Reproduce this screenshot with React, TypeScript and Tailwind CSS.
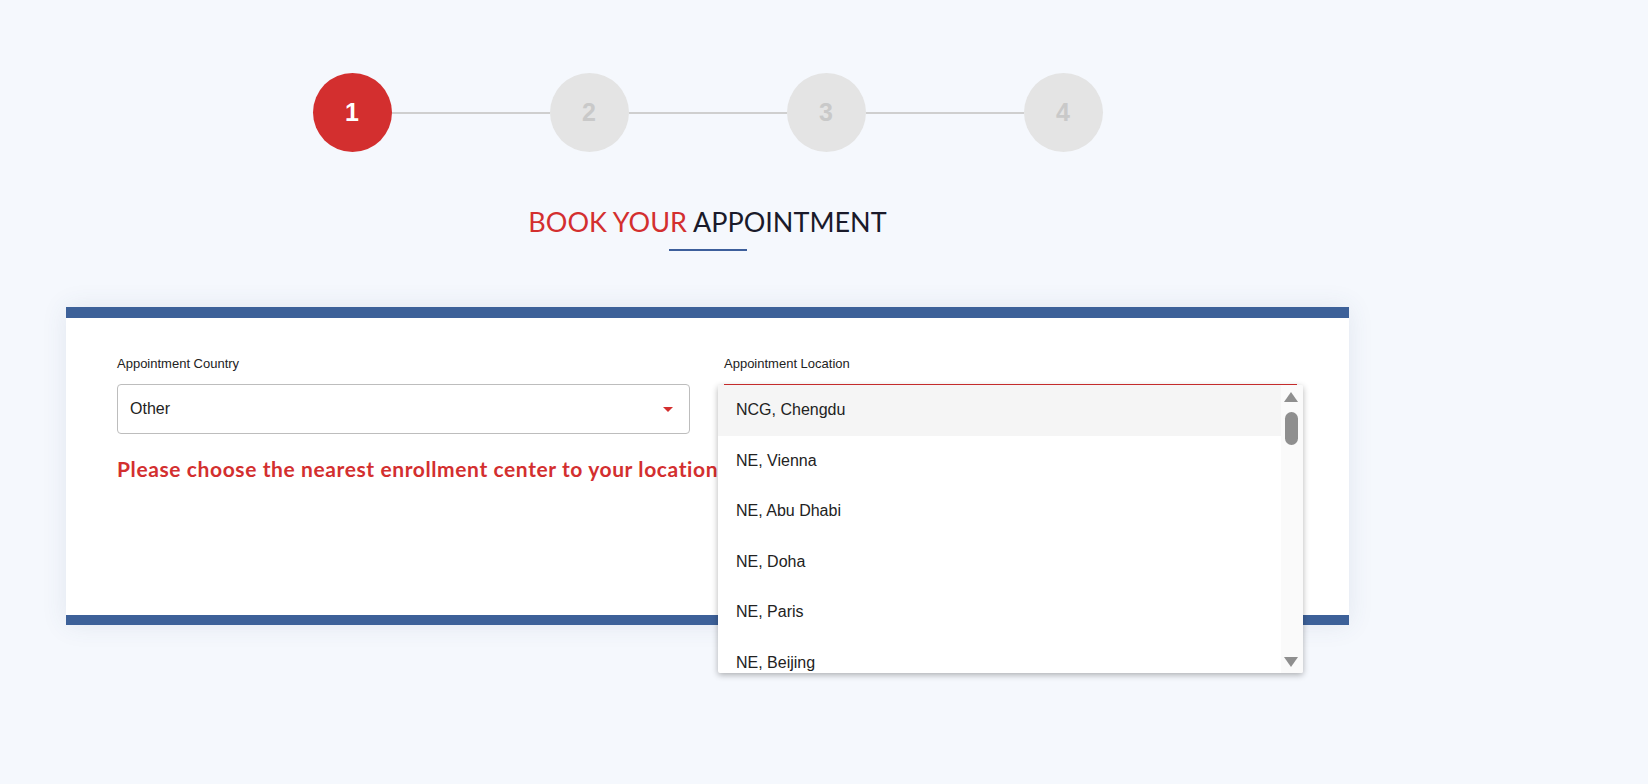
import React from "react";

const items = [
  "NCG, Chengdu",
  "NE, Vienna",
  "NE, Abu Dhabi",
  "NE, Doha",
  "NE, Paris",
  "NE, Beijing",
];

function Step({ n, active }: { n: number; active?: boolean }) {
  return (
    <div
      className={
        active
          ? "w-[79px] h-[79px] rounded-full bg-[#d32f2f] text-white flex items-center justify-center text-[25px] font-bold font-['Liberation_Sans',sans-serif]"
          : "w-[79px] h-[79px] rounded-full bg-[#e4e4e4] text-[#c9c9c9] flex items-center justify-center text-[25px] font-bold font-['Liberation_Sans',sans-serif]"
      }
    >
      {n}
    </div>
  );
}

function Line() {
  return <div className="w-[158px] h-[2px] bg-[#cfcfcf]" />;
}

export default function App() {
  return (
    <div className="w-full min-h-[784px] bg-[#f5f8fd] font-['Liberation_Sans',Arial,sans-serif]">
      <div className="ml-[66px] w-[1283px]">
        <div className="pt-[73px] flex items-center justify-center">
          <Step n={1} active />
          <Line />
          <Step n={2} />
          <Line />
          <Step n={3} />
          <Line />
          <Step n={4} />
        </div>

        <div className="mt-[54px] flex flex-col items-center">
          <h1 className="text-[27px] leading-[32px] font-['Lato',sans-serif] font-normal">
            <span className="text-[#d32f2f]">BOOK YOUR </span>
            <span className="text-[#1a1a2a]">APPOINTMENT</span>
          </h1>
          <div className="mt-[11px] w-[78px] h-[2px] bg-[#3d5f9b]" />
        </div>

        <div className="mt-[56px] bg-white shadow-[0_0_24px_rgba(60,80,120,0.10)]">
          <div className="h-[11px] bg-[#3d6199]" />
          <div className="h-[297px] pl-[51px] pr-[52px] pt-[38px]">
            <div className="grid grid-cols-2 gap-x-[34px]">
              <div>
                <div className="text-[13px] leading-[16px] text-[#222] font-['Liberation_Sans_Narrow','Arial_Narrow',sans-serif]">
                  Appointment Country
                </div>
                <div className="mt-[12px] h-[50px] border border-[#bdbdbd] rounded-[4px] flex items-center justify-between pl-[12px] pr-[16px]">
                  <span className="text-[16px] text-[#222]">Other</span>
                  <span className="w-0 h-0 border-l-[5px] border-r-[5px] border-t-[5px] border-l-transparent border-r-transparent border-t-[#d32f2f]" />
                </div>
              </div>
              <div>
                <div className="text-[13px] leading-[16px] text-[#222] font-['Liberation_Sans_Narrow','Arial_Narrow',sans-serif]">
                  Appointment Location
                </div>
                <div className="relative mt-[12px] h-[50px] border-t border-[#d32f2f]">
                  <div className="absolute left-[-6px] top-0 w-[585px] h-[288px] bg-white shadow-[0_2px_6px_rgba(0,0,0,0.3)] rounded-[2px] flex z-10 overflow-hidden">
                    <div className="flex-1 flex flex-col">
                      {items.map((it, i) => (
                        <div
                          key={it}
                          className={
                            (i === 0 ? "bg-[#f5f5f5] " : "") +
                            "h-[50.5px] shrink-0 flex items-center pl-[18px] text-[16px] text-[#222]"
                          }
                        >
                          {it}
                        </div>
                      ))}
                    </div>
                    <div className="w-[22px] bg-[#fafafa] relative">
                      <div className="absolute left-[3px] top-[7px] w-0 h-0 border-l-[7.5px] border-r-[7.5px] border-b-[10px] border-l-transparent border-r-transparent border-b-[#8f8f8f]" />
                      <div className="absolute left-[4px] top-[27px] w-[13px] h-[33px] rounded-full bg-[#8f8f8f]" />
                      <div className="absolute left-[3px] top-[272px] w-0 h-0 border-l-[7.5px] border-r-[7.5px] border-t-[10px] border-l-transparent border-r-transparent border-t-[#8f8f8f]" />
                    </div>
                  </div>
                </div>
              </div>
            </div>
            <div className="mt-[23px] text-[21px] leading-[24px] tracking-[0.6px] font-bold text-[#d32f2f] font-['Lato',sans-serif] whitespace-nowrap">
              Please choose the nearest enrollment center to your location
            </div>
          </div>
          <div className="h-[10px] bg-[#3d6199]" />
        </div>
      </div>
    </div>
  );
}
